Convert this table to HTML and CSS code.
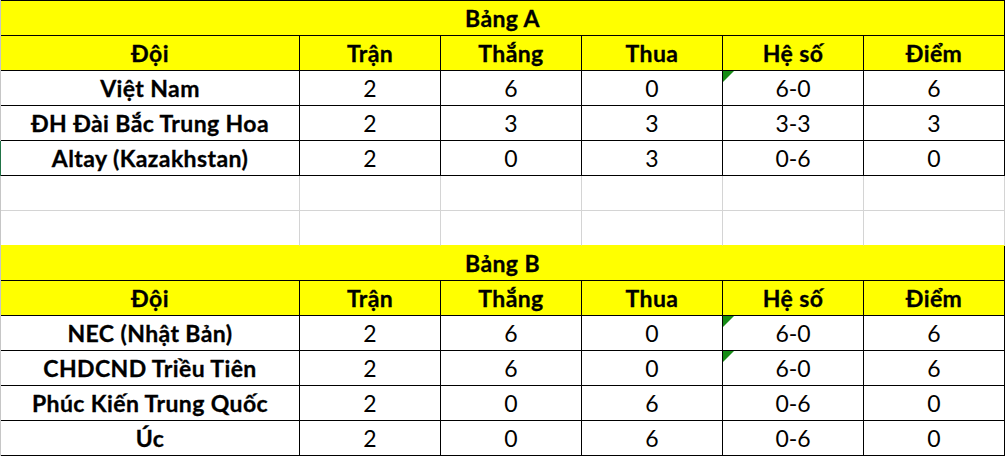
FILE: index.html
```html
<!DOCTYPE html>
<html lang="vi">
<head>
<meta charset="utf-8">
<title>Bảng xếp hạng</title>
<link rel="stylesheet" href="styles.css">
</head>
<body>
<div class="sheet">
  <div class="row title first"><div class="cell">Bảng A</div></div>
  <div class="row head">
    <div class="cell">Đội</div><div class="cell">Trận</div><div class="cell">Thắng</div><div class="cell">Thua</div><div class="cell">Hệ số</div><div class="cell">Điểm</div>
  </div>
  <div class="row data">
    <div class="cell name">Việt Nam</div><div class="cell">2</div><div class="cell">6</div><div class="cell">0</div><div class="cell flag">6-0</div><div class="cell">6</div>
  </div>
  <div class="row data">
    <div class="cell name">ĐH Đài Bắc Trung Hoa</div><div class="cell">2</div><div class="cell">3</div><div class="cell">3</div><div class="cell">3-3</div><div class="cell">3</div>
  </div>
  <div class="row data selected">
    <div class="cell name">Altay (Kazakhstan)</div><div class="cell">2</div><div class="cell">0</div><div class="cell">3</div><div class="cell">0-6</div><div class="cell">0</div>
  </div>
  <div class="row blank">
    <div class="cell"></div><div class="cell"></div><div class="cell"></div><div class="cell"></div><div class="cell"></div><div class="cell"></div>
  </div>
  <div class="row blank last-blank">
    <div class="cell"></div><div class="cell"></div><div class="cell"></div><div class="cell"></div><div class="cell"></div><div class="cell"></div>
  </div>
  <div class="row title"><div class="cell">Bảng B</div></div>
  <div class="row head">
    <div class="cell">Đội</div><div class="cell">Trận</div><div class="cell">Thắng</div><div class="cell">Thua</div><div class="cell">Hệ số</div><div class="cell">Điểm</div>
  </div>
  <div class="row data">
    <div class="cell name">NEC (Nhật Bản)</div><div class="cell">2</div><div class="cell">6</div><div class="cell">0</div><div class="cell flag">6-0</div><div class="cell">6</div>
  </div>
  <div class="row data">
    <div class="cell name">CHDCND Triều Tiên</div><div class="cell">2</div><div class="cell">6</div><div class="cell">0</div><div class="cell flag">6-0</div><div class="cell">6</div>
  </div>
  <div class="row data">
    <div class="cell name">Phúc Kiến Trung Quốc</div><div class="cell">2</div><div class="cell">0</div><div class="cell">6</div><div class="cell">0-6</div><div class="cell">0</div>
  </div>
  <div class="row data">
    <div class="cell name">Úc</div><div class="cell">2</div><div class="cell">0</div><div class="cell">6</div><div class="cell">0-6</div><div class="cell">0</div>
  </div>
</div>
</body>
</html>
```

FILE: styles.css
```css
html, body {
  margin: 0;
  padding: 0;
  background: #ffffff;
}

.sheet {
  width: 1005px;
  font-family: Lato, "Liberation Sans", sans-serif;
  font-size: 23px;
  color: #000000;
}

.row {
  display: grid;
  grid-template-columns: 299px repeat(5, 141px);
  border-left: 1px solid #c6c6c6;
}

.row.selected {
  border-left-color: #217346;
}

.cell {
  position: relative;
  box-sizing: border-box;
  height: 35px;
  line-height: 34px;
  text-align: center;
  white-space: nowrap;
  border-right: 1px solid #000000;
  border-bottom: 1px solid #000000;
}

.title .cell {
  grid-column: 1 / -1;
  background: #ffff00;
  font-weight: 700;
  letter-spacing: 0.4px;
  -webkit-text-stroke: 0.3px #000000;
}

.first .cell {
  height: 36px;
  border-top: 1px solid #000000;
}

.head .cell {
  background: #ffff00;
  font-weight: 700;
  letter-spacing: 0.4px;
  -webkit-text-stroke: 0.3px #000000;
}

.data .name {
  font-weight: 700;
  letter-spacing: 0.4px;
  -webkit-text-stroke: 0.3px #000000;
}

.blank .cell {
  border-right-color: #d4d4d4;
  border-bottom-color: #d4d4d4;
}

.last-blank .cell {
  border-bottom-color: #ffff00;
}

.flag::before {
  content: "";
  position: absolute;
  left: 0;
  top: 0;
  width: 0;
  height: 0;
  border-top: 11px solid #168c16;
  border-right: 11px solid transparent;
}
```
